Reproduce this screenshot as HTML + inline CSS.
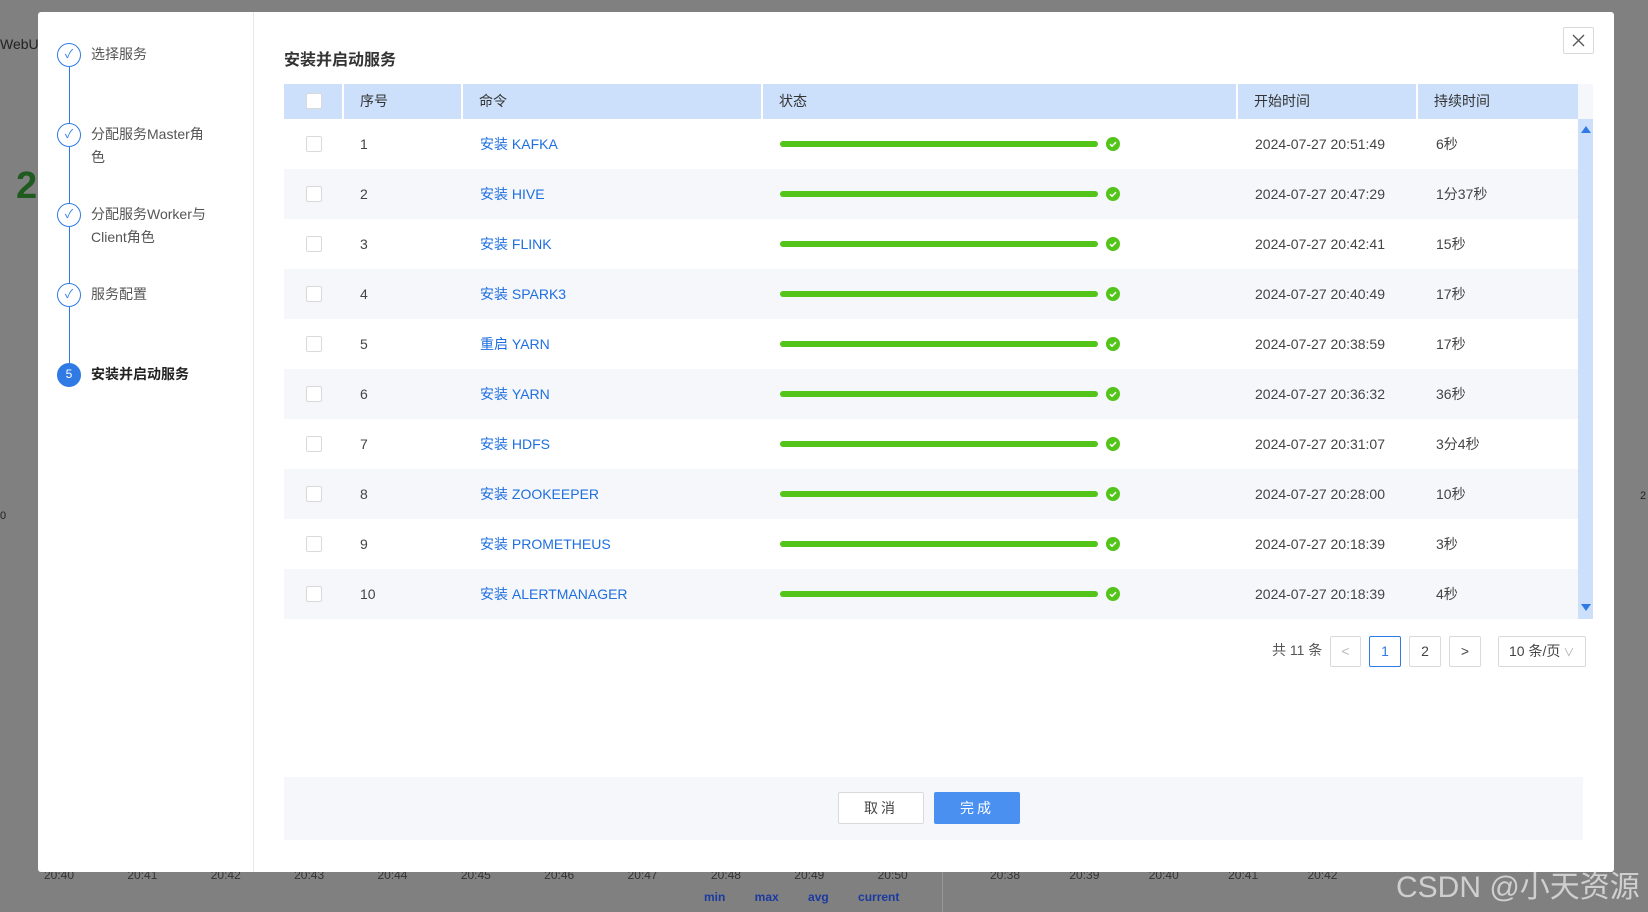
<!DOCTYPE html>
<html><head><meta charset="utf-8"><style>
*{box-sizing:border-box;margin:0;padding:0}
body{width:1648px;height:912px;overflow:hidden;background:#808080;font-family:"Liberation Sans","Noto Sans CJK SC",sans-serif;position:relative;color:#444}
.abs{position:absolute}
.modal{left:38px;top:12px;width:1576px;height:860px;background:#fff;border-radius:3px}
.side{left:38px;top:12px;width:216px;height:860px;border-right:1px solid #e8e8e8}
.step{position:absolute;left:57px;width:24px;height:24px;border:1.5px solid #2f7ae5;border-radius:50%;background:#fff;color:#2f7ae5;font-size:12px;text-align:center;line-height:21px}
.stxt{position:absolute;left:91px;font-size:14px;color:#555;line-height:23px;width:126px}
.vline{position:absolute;left:68.5px;width:1px;background:#2f7ae5}
.th{position:absolute;top:84px;height:35px;background:#cce0fb;font-size:14px;color:#333;line-height:35px;padding-left:16px;border-right:2px solid #fff}
.row{position:absolute;left:284px;width:1294px;height:50px;font-size:14px;line-height:50px}
.row span{position:absolute}
.cb{position:absolute;width:16px;height:16px;border:1px solid #d9d9d9;background:#fff;border-radius:2px}
.bar{position:absolute;left:496px;top:22px;width:318px;height:6px;border-radius:3px;background:#52c41a}
.ok{position:absolute;left:822px;top:18px;width:14px;height:14px;border-radius:50%;background:#52c41a;line-height:0}
.ok svg{display:block}
.lnk{color:#1f6fe0}
.pg{position:absolute;top:636px;height:31px;border:1px solid #d9d9d9;border-radius:2px;text-align:center;line-height:29px;font-size:14px;color:#444;background:#fff}
.btn{position:absolute;top:792px;height:32px;font-size:14px;line-height:30px;text-align:center;border-radius:2px;letter-spacing:3px}
</style></head><body>
<div class="abs" style="left:0;top:36px;font-size:14px;color:#222">WebUI</div>
<div class="abs" style="left:16px;top:165px;font-size:38px;color:#1f5a1f;font-weight:bold">2</div>
<div class="abs" style="left:0;top:510px;font-size:11px;color:#222">0</div>
<div class="abs" style="left:1640px;top:490px;font-size:11px;color:#222">2</div>
<div class="abs" style="left:44px;top:868px;font-size:12px;color:#333;word-spacing:50px;white-space:nowrap">20:40 20:41 20:42 20:43 20:44 20:45 20:46 20:47 20:48 20:49 20:50</div>
<div class="abs" style="left:990px;top:868px;font-size:12px;color:#333;word-spacing:46px;white-space:nowrap">20:38 20:39 20:40 20:41 20:42</div>
<div class="abs" style="left:704px;top:890px;font-size:12px;color:#1a3aa0;font-weight:bold;word-spacing:26px">min max avg current</div>
<div class="abs" style="left:942px;top:872px;width:1px;height:40px;background:#999"></div>
<div class="abs modal"></div>
<div class="abs side"></div>
<div class="vline" style="top:67px;height:296px"></div>
<div class="step" style="top:43px">✓</div><div class="stxt" style="top:43px">选择服务</div>
<div class="step" style="top:123px">✓</div><div class="stxt" style="top:123px">分配服务Master角色</div>
<div class="step" style="top:203px">✓</div><div class="stxt" style="top:203px">分配服务Worker与Client角色</div>
<div class="step" style="top:283px">✓</div><div class="stxt" style="top:283px">服务配置</div>
<div class="step" style="top:363px;background:#2f7ae5;color:#fff;line-height:21px">5</div><div class="stxt" style="top:363px;color:#222;font-weight:bold;width:140px">安装并启动服务</div>
<div class="abs" style="left:284px;top:46px;font-size:16px;font-weight:bold;color:#333">安装并启动服务</div>
<div class="abs" style="left:1563px;top:27px;width:31px;height:27px;border:1px solid #d9d9d9;border-radius:2px"><svg width="29" height="25"><path d="M9 7l11 11M20 7L9 18" stroke="#555" stroke-width="1.3" fill="none"/></svg></div>
<div class="th" style="left:284px;width:60px"><div class="cb" style="left:22px;top:9px"></div></div>
<div class="th" style="left:344px;width:119px">序号</div>
<div class="th" style="left:463px;width:300px">命令</div>
<div class="th" style="left:763px;width:475px">状态</div>
<div class="th" style="left:1238px;width:180px">开始时间</div>
<div class="th" style="left:1418px;width:160px;border-right:0">持续时间</div>
<div class="abs" style="left:1578px;top:84px;width:15px;height:35px;background:#f5f7fa"></div>
<div class="abs" style="left:1578px;top:119px;width:15px;height:500px;background:#cce0fb"></div>
<div class="abs" style="left:1581px;top:126px;border:5px solid transparent;border-bottom:7px solid #2f7ae5;border-top:0"></div>
<div class="abs" style="left:1581px;top:604px;border:5px solid transparent;border-top:7px solid #2f7ae5;border-bottom:0"></div>
<div id="rows"></div>
<div class="abs" style="left:1272px;top:640px;font-size:14px;color:#555">共 11 条</div>
<div class="pg" style="left:1330px;width:31px;color:#bbb">&lt;</div>
<div class="pg" style="left:1369px;width:32px;border-color:#2f7ae5;color:#2f7ae5">1</div>
<div class="pg" style="left:1409px;width:32px">2</div>
<div class="pg" style="left:1449px;width:32px">&gt;</div>
<div class="pg" style="left:1498px;width:88px;text-align:left;padding-left:10px">10 条/页<span style="color:#aaa;font-size:11px"> ∨</span></div>
<div class="abs" style="left:284px;top:777px;width:1299px;height:63px;background:#f5f7fa"></div>
<div class="btn" style="left:838px;width:86px;border:1px solid #d9d9d9;background:#fff;color:#444">取消</div>
<div class="btn" style="left:934px;width:86px;background:#4a90f0;color:#fff;border:1px solid #4a90f0">完成</div>
<div class="abs" style="left:1396px;top:862px;font-size:30px;color:#ddd;opacity:.85">CSDN @小天资源</div>
<script>
var d=[["1","安装 KAFKA","2024-07-27 20:51:49","6秒"],["2","安装 HIVE","2024-07-27 20:47:29","1分37秒"],["3","安装 FLINK","2024-07-27 20:42:41","15秒"],["4","安装 SPARK3","2024-07-27 20:40:49","17秒"],["5","重启 YARN","2024-07-27 20:38:59","17秒"],["6","安装 YARN","2024-07-27 20:36:32","36秒"],["7","安装 HDFS","2024-07-27 20:31:07","3分4秒"],["8","安装 ZOOKEEPER","2024-07-27 20:28:00","10秒"],["9","安装 PROMETHEUS","2024-07-27 20:18:39","3秒"],["10","安装 ALERTMANAGER","2024-07-27 20:18:39","4秒"]];
var h="";d.forEach(function(r,i){h+='<div class="row" style="top:'+(119+i*50)+'px;background:'+(i%2?'#f5f7fa':'#fff')+'"><div class="cb" style="left:22px;top:17px"></div><span style="left:76px">'+r[0]+'</span><span class="lnk" style="left:196px">'+r[1]+'</span><div class="bar"></div><div class="ok"><svg width="14" height="14"><path d="M4 7.2l2 2 4-4" stroke="#fff" stroke-width="1.5" fill="none"/></svg></div><span style="left:971px">'+r[2]+'</span><span style="left:1152px">'+r[3]+'</span></div>';});
document.getElementById("rows").innerHTML=h;
</script>
</body></html>
